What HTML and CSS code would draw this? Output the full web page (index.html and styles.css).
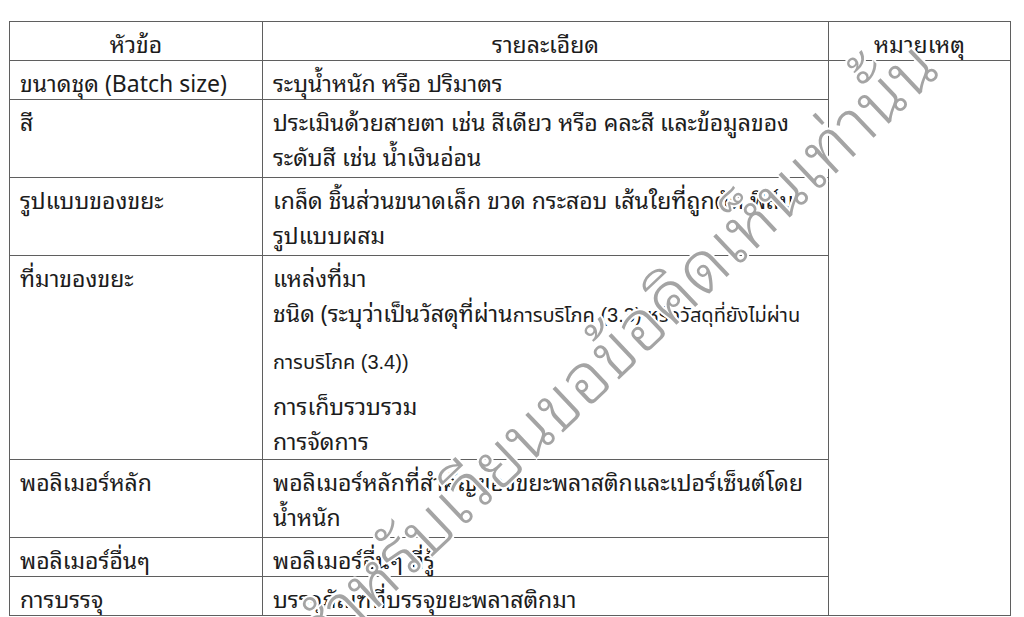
FILE: index.html
```html
<!DOCTYPE html>
<html lang="th">
<head>
<meta charset="utf-8">
<link rel="stylesheet" href="styles.css">
</head>
<body>
<div class="page">
  <table class="spec">
    <colgroup>
      <col class="c1"><col class="c2"><col class="c3">
    </colgroup>
    <thead>
      <tr class="r1">
        <th>หัวข้อ</th>
        <th>รายละเอียด</th>
        <th>หมายเหตุ</th>
      </tr>
    </thead>
    <tbody>
      <tr class="r1">
        <td>ขนาดชุด (Batch size)</td>
        <td>ระบุน้ำหนัก หรือ ปริมาตร</td>
        <td class="note" rowspan="7"></td>
      </tr>
      <tr class="r2">
        <td>สี</td>
        <td>ประเมินด้วยสายตา เช่น สีเดียว หรือ คละสี และข้อมูลของ<br>ระดับสี เช่น น้ำเงินอ่อน</td>
      </tr>
      <tr class="r2">
        <td>รูปแบบของขยะ</td>
        <td>เกล็ด ชิ้นส่วนขนาดเล็ก ขวด กระสอบ เส้นใยที่ถูกตัด ฟิล์ม<br>รูปแบบผสม</td>
      </tr>
      <tr class="r4">
        <td>ที่มาของขยะ</td>
        <td>
          <div class="ln l1">แหล่งที่มา</div>
          <div class="ln l2">ชนิด (ระบุว่าเป็นวัสดุที่ผ่าน<span class="alt">การบริโภค (3.3) หรือวัสดุที่ยังไม่ผ่าน</span></div>
          <div class="ln l3"><span class="alt">การบริโภค (3.4))</span></div>
          <div class="ln l4">การเก็บรวบรวม</div>
          <div class="ln l5">การจัดการ</div>
        </td>
      </tr>
      <tr class="r2">
        <td>พอลิเมอร์หลัก</td>
        <td>พอลิเมอร์หลักที่สำคัญของขยะพลาสติกและเปอร์เซ็นต์โดย<br>น้ำหนัก</td>
      </tr>
      <tr class="r1">
        <td>พอลิเมอร์อื่นๆ</td>
        <td>พอลิเมอร์อื่นๆ ที่รู้</td>
      </tr>
      <tr class="r1">
        <td>การบรรจุ</td>
        <td>บรรจุภัณฑ์ที่บรรจุขยะพลาสติกมา</td>
      </tr>
    </tbody>
  </table>
  <div class="watermark" aria-hidden="true">สำหรับเวียนขอข้อคิดเห็นเท่านั้น</div>
</div>
</body>
</html>
```
FILE: styles.css
```css
html, body {
  margin: 0;
  padding: 0;
  background: #ffffff;
}
body {
  width: 1024px;
  height: 617px;
  overflow: hidden;
  font-family: "Tahoma", "Noto Sans Thai Looped", "Noto Sans Thai", "DejaVu Sans", sans-serif;
  color: #1c1c1c;
}
.page {
  position: relative;
  width: 1024px;
  height: 617px;
  padding: 21px 0 0 9px;
  box-sizing: border-box;
  overflow: hidden;
}
.spec {
  border-collapse: collapse;
  width: 1001px;
  table-layout: fixed;
  font-size: 23px;
}
.c1 { width: 253px; }
.c2 { width: 566px; }
.c3 { width: 182px; }
.spec th,
.spec td {
  border: 1.5px solid #5f5f5f;
  padding: 3px 10px 0;
  line-height: 35px;
  vertical-align: top;
  text-align: left;
  font-weight: normal;
}
.spec th {
  text-align: center;
}
.r1 { height: 38.5px; }
.r2 td { padding-bottom: 4px; }
.r4 td { padding-bottom: 2px; }
.ln { line-height: 35px; }
.l3 { margin-top: 8px; }
.l4 { margin-top: 7px; }
.alt {
  font-family: "Liberation Sans", "Noto Sans Thai", sans-serif;
  font-size: 20px;
}
.watermark {
  position: absolute;
  left: 277px;
  top: 613px;
  transform: rotate(-43.5deg);
  transform-origin: left top;
  font-size: 70px;
  font-weight: 300;
  line-height: 1;
  white-space: nowrap;
  color: #a4a4a4;
  text-shadow:
    2px 0 0 #fff, -2px 0 0 #fff, 0 2px 0 #fff, 0 -2px 0 #fff,
    1.5px 1.5px 0 #fff, -1.5px 1.5px 0 #fff, 1.5px -1.5px 0 #fff, -1.5px -1.5px 0 #fff;
  pointer-events: none;
}
```
